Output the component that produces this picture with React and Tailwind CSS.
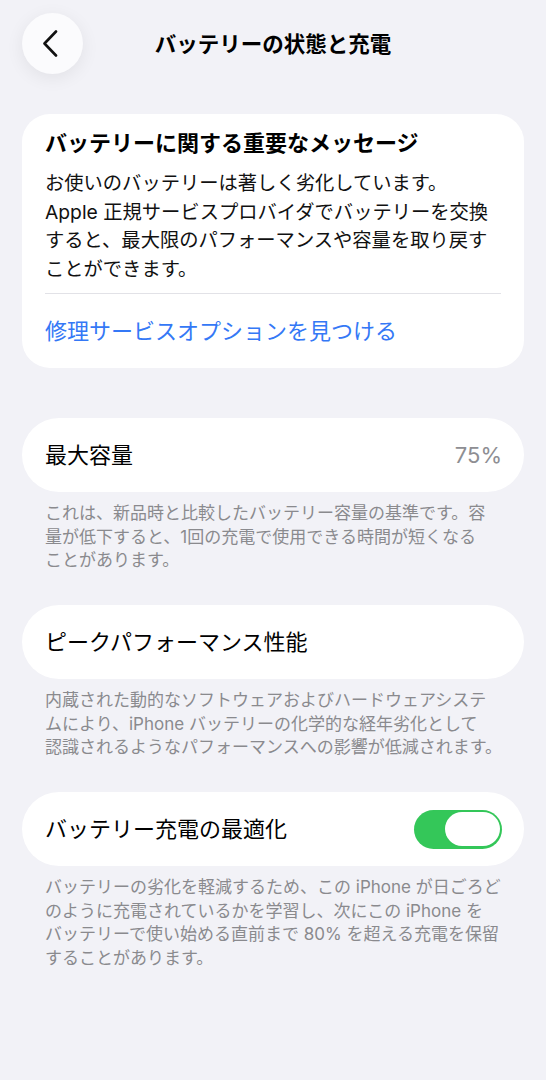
import React from "react";

const Footer = ({ lines }) => (
  <div className="px-[23px] pt-[10px] pb-[32.5px] text-[17px] leading-[23.5px] text-[#8a8a8e]">
    {lines.map((l, i) => (
      <div key={i} className="whitespace-nowrap">
        {l}
      </div>
    ))}
  </div>
);

const RowCard = ({ children }) => (
  <div className="h-[74px] rounded-full bg-white flex items-center justify-between pl-[23px] pr-[22px]">
    {children}
  </div>
);

const App = () => {
  return (
    <div className="min-h-screen bg-[#f2f2f7] font-[Inter,'Noto_Sans_CJK_JP',sans-serif] text-black">
      <div className="flex items-center pt-[13px]">
        <button className="ml-[22px] w-[61px] h-[61px] rounded-full bg-[#fbfbfd] shadow-[0_4px_18px_rgba(0,0,0,0.07)] flex items-center justify-center shrink-0">
          <svg width="17" height="27" viewBox="0 0 17 27" className="-ml-[5px]">
            <path
              d="M14 1.5 L2.5 13.5 L14 25.5"
              fill="none"
              stroke="#111"
              strokeWidth="2.6"
              strokeLinecap="round"
              strokeLinejoin="round"
            />
          </svg>
        </button>
        <h1 className="flex-1 text-center text-[21.5px] font-bold leading-[28px]">
          バッテリーの状態と充電
        </h1>
        <div className="w-[83px] shrink-0" />
      </div>

      <div className="px-[22px] mt-[40px]">
        <div className="rounded-[28px] bg-white px-[23px] pt-[15px] pb-[23px]">
          <h2 className="text-[22px] font-bold leading-[28px] whitespace-nowrap">
            バッテリーに関する重要なメッセージ
          </h2>
          <div className="mt-[12px] text-[19.3px] leading-[28.5px] text-[#111]">
            <div className="whitespace-nowrap">お使いのバッテリーは著しく劣化しています。</div>
            <div className="whitespace-nowrap">Apple 正規サービスプロバイダでバッテリーを交換</div>
            <div className="whitespace-nowrap">すると、最大限のパフォーマンスや容量を取り戻す</div>
            <div className="whitespace-nowrap">ことができます。</div>
          </div>
          <div className="mt-[10px] h-px bg-[#e2e2e7]" />
          <div className="mt-[23px] text-[22px] leading-[28px] text-[#3478f6] whitespace-nowrap">
            修理サービスオプションを見つける
          </div>
        </div>

        <div className="mt-[50px]">
          <RowCard>
            <span className="text-[22px]">最大容量</span>
            <span className="text-[22px] text-[#8e8e93]">75%</span>
          </RowCard>
          <Footer
            lines={[
              "これは、新品時と比較したバッテリー容量の基準です。容",
              "量が低下すると、1回の充電で使用できる時間が短くなる",
              "ことがあります。",
            ]}
          />

          <RowCard>
            <span className="text-[22px]">ピークパフォーマンス性能</span>
          </RowCard>
          <Footer
            lines={[
              "内蔵された動的なソフトウェアおよびハードウェアシステ",
              "ムにより、iPhone バッテリーの化学的な経年劣化として",
              "認識されるようなパフォーマンスへの影響が低減されます。",
            ]}
          />

          <RowCard>
            <span className="text-[22px]">バッテリー充電の最適化</span>
            <div className="w-[88px] h-[39px] rounded-full bg-[#34c759] flex items-center justify-end p-[2.5px]">
              <div className="w-[55px] h-[34px] rounded-full bg-white shadow-[0_0_0_1px_rgba(52,199,89,0.35)]" />
            </div>
          </RowCard>
          <Footer
            lines={[
              "バッテリーの劣化を軽減するため、この iPhone が日ごろど",
              "のように充電されているかを学習し、次にこの iPhone を",
              "バッテリーで使い始める直前まで 80% を超える充電を保留",
              "することがあります。",
            ]}
          />
        </div>
      </div>
    </div>
  );
};

export default App;
